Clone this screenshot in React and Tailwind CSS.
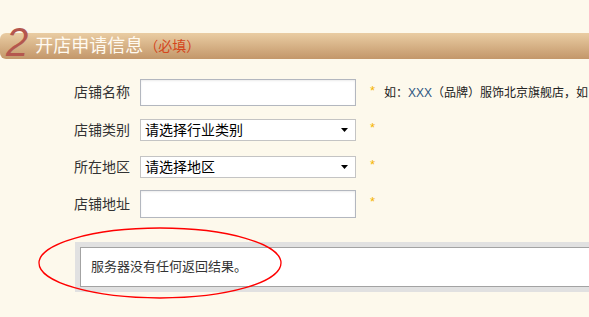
const cn = '"Liberation Sans", "Noto Sans CJK SC", sans-serif';

function Label({ children }) {
  return (
    <div className="w-[56px] shrink-0 text-right text-[14px] text-[#333]" style={{ fontFamily: cn }}>
      {children}
    </div>
  );
}

function Star() {
  return <span className="shrink-0 ml-[14px] text-[13px] leading-none text-[#f5b400] -mt-[5px]">*</span>;
}

function FakeSelect({ text }) {
  return (
    <div className="shrink-0 ml-[10px] w-[216px] h-full flex items-center justify-between bg-white border border-[#c4c4c4] pl-[4px] pr-[7px]">
      <span className="text-[14px] text-black leading-none">{text}</span>
      <svg width="7" height="4" viewBox="0 0 7 4">
        <path d="M0 0H7L3.5 4Z" fill="#000" />
      </svg>
    </div>
  );
}

function TextInput() {
  return <div className="shrink-0 ml-[10px] w-[216px] h-full bg-white border border-[#b3b7bf] shadow-[inset_0_1px_2px_rgba(0,0,0,0.08)]" />;
}

export default function App() {
  return (
    <div className="relative w-full h-[317px] overflow-hidden bg-[#fdf9ec]" style={{ fontFamily: cn }}>
      {/* section header */}
      <div className="mt-[33px] h-[26px] rounded-l-[6px] bg-gradient-to-b from-[#eacda3] to-[#c3976a] flex items-center pl-[6px]">
        <span
          className="mb-[8px] text-[40px] leading-[40px] italic text-[#b4574e]"
          style={{ fontFamily: '"Liberation Sans", sans-serif' }}
        >
          2
        </span>
        <span className="ml-[7px] text-[18px] leading-none text-[#fffaf0]">开店申请信息</span>
        <span className="text-[14px] leading-none text-[#d4461c] ml-[1px]">（必填）</span>
      </div>

      {/* form */}
      <div className="pl-[74px] flex flex-col whitespace-nowrap">
        <div className="mt-[20px] h-[27px] flex items-center">
          <Label>店铺名称</Label>
          <TextInput />
          <Star />
          <span className="shrink-0 ml-[9px] text-[12px] text-[#222]">
            如：<span className="text-[#2d5580]">XXX</span>（品牌）服饰北京旗舰店，如：
          </span>
        </div>
        <div className="mt-[13px] h-[22px] flex items-center">
          <Label>店铺类别</Label>
          <FakeSelect text="请选择行业类别" />
          <Star />
        </div>
        <div className="mt-[15px] h-[22px] flex items-center">
          <Label>所在地区</Label>
          <FakeSelect text="请选择地区" />
          <Star />
        </div>
        <div className="mt-[12px] h-[28px] flex items-center">
          <Label>店铺地址</Label>
          <TextInput />
          <Star />
        </div>
      </div>

      {/* message box */}
      <div className="mt-[24px] ml-[75px] w-[600px] h-[50px] bg-[#e1e1e1] p-[5px]">
        <div className="h-full bg-white border border-[#a3a3a3] flex items-center pl-[10px]">
          <span className="text-[13px] text-[#333]">服务器没有任何返回结果。</span>
        </div>
      </div>

      {/* annotation ellipse */}
      <svg className="absolute left-0 top-0 pointer-events-none" width="589" height="317">
        <ellipse cx="160" cy="263" rx="121" ry="35" fill="none" stroke="#ff0000" strokeWidth="1.3" />
      </svg>
    </div>
  );
}
